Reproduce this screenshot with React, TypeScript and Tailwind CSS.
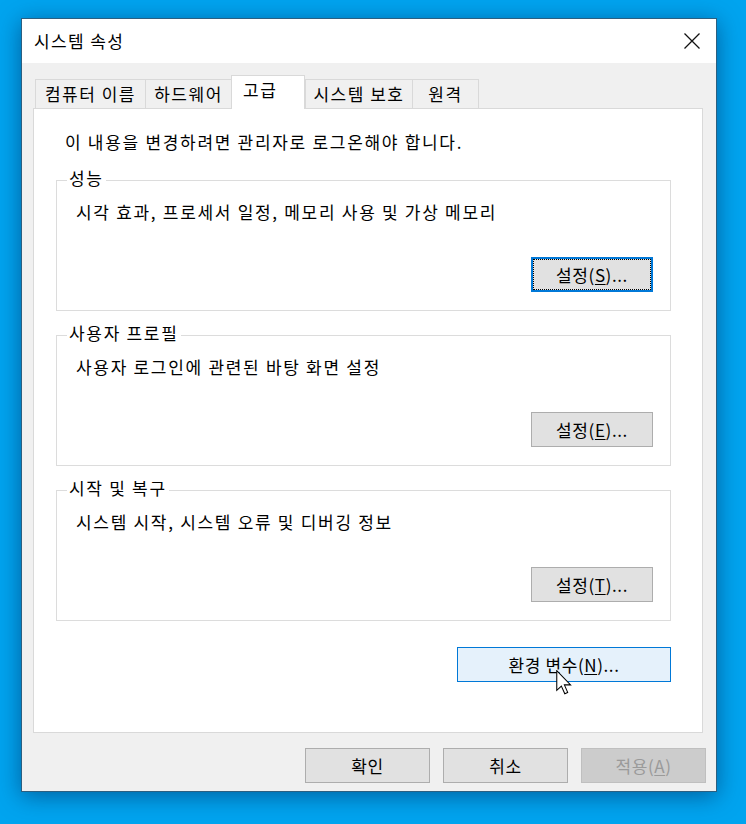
import React from 'react';

const font = { fontFamily: '"Noto Sans CJK KR", "Noto Sans", sans-serif' };

const tabs = [
  { label: '컴퓨터 이름', w: 110 },
  { label: '하드웨어', w: 86 },
  { label: '고급', w: 74, active: true },
  { label: '시스템 보호', w: 107 },
  { label: '원격', w: 67 },
];

function Button({
  children,
  focused,
  hover,
  disabled,
  className = '',
}: {
  children: React.ReactNode;
  focused?: boolean;
  hover?: boolean;
  disabled?: boolean;
  className?: string;
}) {
  let skin = 'bg-[#e1e1e1] border border-[#adadad] text-black';
  if (focused) skin = 'bg-[#e1e1e1] border-2 border-[#0078d7] text-black';
  if (hover) skin = 'bg-[#e5f1fb] border border-[#0078d7] text-black';
  if (disabled) skin = 'bg-[#cccccc] border border-[#bfbfbf] text-[#9a9a9a]';
  return (
    <div className={`flex items-center justify-center tracking-[0.6px] ${skin} ${className}`}>
      {focused ? (
        <div className="flex h-full w-full items-center justify-center border border-dotted border-black">
          {children}
        </div>
      ) : (
        children
      )}
    </div>
  );
}

function Group({
  title,
  desc,
  hotkey,
  focused,
}: {
  title: string;
  desc: string;
  hotkey: string;
  focused?: boolean;
}) {
  return (
    <div className="relative h-[131px] border border-[#dcdcdc]">
      <span className="absolute left-[10px] top-[-14px] bg-white px-[2px] leading-[22px]">{title}</span>
      <div className="pl-[19px] pt-[20px] leading-[22px]">{desc}</div>
      <div className="absolute bottom-[18px] right-[17px]">
        <Button focused={focused} className="h-[35px] w-[122px]">
          <span>
            설정(<span className="underline underline-offset-2">{hotkey}</span>)...
          </span>
        </Button>
      </div>
    </div>
  );
}

export default function App() {
  return (
    <div
      className="relative h-[824px] w-[746px] overflow-hidden bg-[#00a4ef] pl-[21px] pt-[18px] text-[17px] tracking-[1.7px] text-black"
      style={font}
    >
      <div className="flex h-[774px] w-[696px] flex-col border border-[#2c5f80] bg-[#f0f0f0] shadow-[0_4px_22px_rgba(0,40,90,0.55)]">
        {/* title bar */}
        <div className="flex h-[44px] items-center justify-between bg-white pl-[12px] pr-[14px] tracking-[1.4px]">
          <span className="leading-[22px]">시스템 속성</span>
          <svg width="18" height="18" viewBox="0 0 18 18" className="mr-[1px]">
            <path d="M1.5 1.5 L16.5 16.5 M16.5 1.5 L1.5 16.5" stroke="#111" strokeWidth="1.3" />
          </svg>
        </div>

        {/* tabs */}
        <div className="px-[11px] pt-[12px]">
          <div className="flex h-[33px] items-end pl-[2px] tracking-[1.5px]">
            {tabs.map((t) =>
              t.active ? (
                <div
                  key={t.label}
                  className="relative z-10 mb-[-1px] flex h-[34px] items-start border border-b-0 border-[#d9d9d9] bg-white pl-[11px] pt-[3px] leading-[22px]"
                  style={{ width: t.w }}
                >
                  {t.label}
                </div>
              ) : (
                <div
                  key={t.label}
                  className="flex h-[29px] items-center justify-center border border-b-0 border-r-0 border-[#d9d9d9] bg-[#f0f0f0] leading-[22px] last:border-r"
                  style={{ width: t.w }}
                >
                  {t.label}
                </div>
              ),
            )}
          </div>

          {/* panel */}
          <div className="flex h-[625px] w-[670px] flex-col border border-[#d9d9d9] bg-white pl-[22px] pr-[31px]">
            <div className="pl-[9px] pt-[22px] leading-[22px]">이 내용을 변경하려면 관리자로 로그온해야 합니다.</div>
            <div className="mt-[27px] flex flex-col gap-[24px]">
              <Group title="성능" desc="시각 효과, 프로세서 일정, 메모리 사용 및 가상 메모리" hotkey="S" focused />
              <Group title="사용자 프로필" desc="사용자 로그인에 관련된 바탕 화면 설정" hotkey="E" />
              <Group title="시작 및 복구" desc="시스템 시작, 시스템 오류 및 디버깅 정보" hotkey="T" />
            </div>
            <div className="mt-[26px] flex justify-end">
              <Button hover className="h-[35px] w-[214px]">
                <span>
                  환경 변수(<span className="underline underline-offset-2">N</span>)...
                </span>
              </Button>
            </div>
          </div>
        </div>

        {/* footer buttons */}
        <div className="mt-[15px] flex justify-end gap-[13px] pr-[10px]">
          <Button className="h-[35px] w-[125px]">확인</Button>
          <Button className="h-[35px] w-[125px]">취소</Button>
          <Button disabled className="h-[35px] w-[125px]">
            <span>
              적용(<span className="underline underline-offset-2">A</span>)
            </span>
          </Button>
        </div>
      </div>

      {/* mouse cursor */}
      <svg
        width="18"
        height="25"
        viewBox="0 0 12 19"
        className="absolute left-[555px] top-[670px]"
      >
        <path
          d="M0.5 0.5 L0.5 15.5 L4 12.2 L6.6 18 L8.8 17 L6.3 11.3 L11 11.3 Z"
          fill="#fff"
          stroke="#000"
          strokeWidth="0.8"
          strokeLinejoin="miter"
        />
      </svg>
    </div>
  );
}
